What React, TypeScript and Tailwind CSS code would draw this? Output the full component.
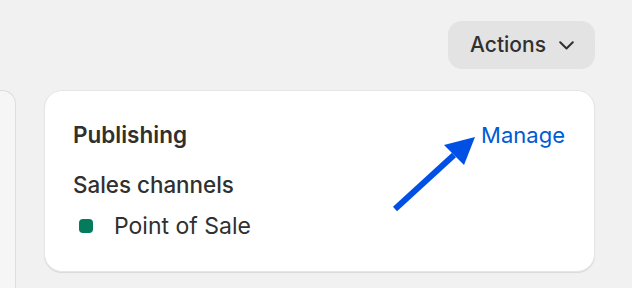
import React from "react";

export default function App() {
  return (
    <div
      className="relative w-[632px] h-[288px] overflow-hidden bg-[#f1f1f1] text-[#303030]"
      style={{ fontFamily: "Inter, 'Noto Sans', sans-serif" }}
    >
      <div className="flex flex-col pt-[21px]">
        <div className="flex justify-end pr-[37px]">
          <button className="flex h-[48px] items-center gap-[13px] rounded-[14px] bg-[#e3e3e3] pl-[22px] pr-[21px] text-[21px] font-medium text-[#303030]">
            <span>Actions</span>
            <svg width="15" height="9" viewBox="0 0 15 9" fill="none">
              <path d="M1.2 1.2 L7.5 7.5 L13.8 1.2" stroke="#303030" strokeWidth="2" strokeLinecap="round" strokeLinejoin="round" />
            </svg>
          </button>
        </div>
        <div className="mt-[21px] flex gap-[28px]">
          <div className="h-[220px] w-[16px] shrink-0 rounded-tr-[14px] border-r border-t border-[#dedede] bg-[#f6f6f6]" />
          <div className="flex h-[182px] w-[551px] shrink-0 flex-col rounded-[18px] border border-[#e6e6e6] bg-white pl-[28px] pr-[29px] pt-[30px] shadow-[0_1px_1px_rgba(0,0,0,0.10)]">
            <div className="flex items-center justify-between leading-[28px]">
              <span className="text-[22.5px] font-semibold">Publishing</span>
              <span className="text-[22px] text-[#005bd3]">Manage</span>
            </div>
            <div className="mt-[22px] text-[22.4px] font-medium leading-[28px]">Sales channels</div>
            <div className="mt-[13px] flex items-center gap-[21px] pl-[6px] text-[23px] leading-[28px]">
              <span className="h-[14px] w-[14px] rounded-[4px] bg-[#047b5d]" />
              <span>Point of Sale</span>
            </div>
          </div>
        </div>
      </div>
      <svg className="pointer-events-none absolute left-0 top-0" width="632" height="288" viewBox="0 0 632 288">
        <line x1="395" y1="209" x2="454" y2="155" stroke="#0050e6" strokeWidth="6" />
        <polygon points="475,137 444,145 464,165" fill="#0050e6" />
      </svg>
    </div>
  );
}
